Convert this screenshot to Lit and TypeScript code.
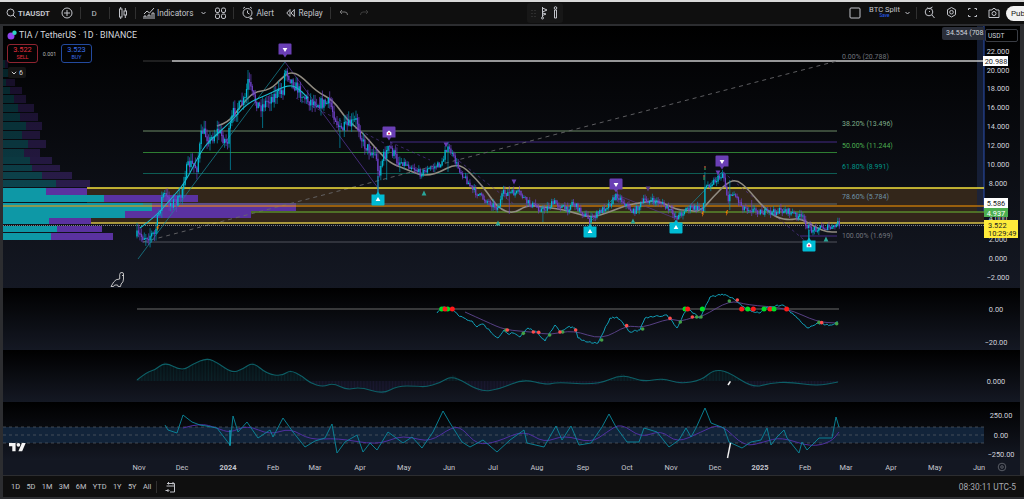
import { LitElement, html, css, svg } from "lit";
import { customElement } from "lit/decorators.js";

type P = [number, number];
const smooth = (pts: P[]) => {
  let d = `M${pts[0][0]} ${pts[0][1]}`;
  for (let i = 1; i < pts.length - 1; i++) {
    const mx = (pts[i][0] + pts[i + 1][0]) / 2, my = (pts[i][1] + pts[i + 1][1]) / 2;
    d += `Q${pts[i][0]} ${pts[i][1]} ${mx} ${my}`;
  }
  const l = pts[pts.length - 1];
  return d + `L${l[0]} ${l[1]}`;
};
const poly = (pts: P[]) => pts.map((p, i) => `${i ? "L" : "M"}${p[0]} ${p[1]}`).join("");

const pricePath: P[] = [[137,236],[145,236],[155,234],[157,222],[163,193],[170,203],[180,200],[185,173],[190,163],[197,167],[202,130],[210,140],[218,130],[227,143],[233,113],[245,100],[248,80],[253,97],[260,107],[272,97],[283,90],[285,68],[293,83],[307,100],[320,103],[330,103],[340,130],[357,120],[363,143],[377,157],[378,175],[383,157],[390,147],[397,160],[413,167],[420,173],[443,163],[445,148],[450,150],[458,167],[473,190],[483,198],[498,208],[503,193],[520,193],[527,202],[543,210],[555,202],[567,210],[572,202],[590,220],[610,203],[617,195],[633,212],[645,200],[660,202],[677,217],[687,208],[703,208],[705,187],[720,177],[723,172],[728,200],[733,192],[743,207],[763,212],[773,212],[785,210],[803,218],[810,230],[820,227],[833,228],[838,223]];
const interp = (x: number) => {
  for (let i = 1; i < pricePath.length; i++) {
    const a = pricePath[i - 1], b = pricePath[i];
    if (x <= b[0]) return a[1] + ((b[1] - a[1]) * (x - a[0])) / Math.max(1, b[0] - a[0]);
  }
  return pricePath[pricePath.length - 1][1];
};
let seed = 7;
const rnd = () => ((seed = (seed * 16807) % 2147483647) - 1) / 2147483646;

const jag = (pts: P[], step: number, amp: number): P[] => {
  const out: P[] = [];
  for (let i = 1; i < pts.length; i++) {
    const a = pts[i - 1], b = pts[i];
    const n = Math.max(1, Math.round((b[0] - a[0]) / step));
    for (let k = 0; k < n; k++) {
      const t = k / n;
      out.push([+(a[0] + (b[0] - a[0]) * t).toFixed(1), +(a[1] + (b[1] - a[1]) * t + (k ? (rnd() - 0.5) * amp * 2 : 0)).toFixed(1)]);
    }
  }
  out.push(pts[pts.length - 1]);
  return out;
};

interface Bar { x: number; o: number; c: number; h: number; l: number }
const bars: Bar[] = [];
const spikes: [number, number, number][] = [[231,118,170],[248,70,104],[262,100,128],[340,118,148],[378,150,196],[386,146,180],[448,142,172],[509,186,214],[543,205,222],[705,172,212],[730,180,210],[752,200,216],[809,226,246]];
{
  let prev = 236;
  for (let x = 137; x <= 840; x += 1.46) {
    const v = x < 400 ? 5.5 : 3;
    const c = interp(x) + (rnd() - 0.5) * v * 2;
    let h = Math.min(prev, c) - rnd() * v * 1.5;
    let l = Math.max(prev, c) + rnd() * v * 1.5;
    for (const s of spikes) if (Math.abs(s[0] - x) < 0.8) { h = Math.min(h, s[1]); l = Math.max(l, s[2]); }
    bars.push({ x, o: prev, c, h, l });
    prev = c;
  }
}
const wicks = (up: boolean) => bars.filter((b) => b.c < b.o === up).map((b) => `M${b.x.toFixed(1)} ${b.h.toFixed(1)}V${b.l.toFixed(1)}`).join("");
const bodies = (up: boolean) => bars.filter((b) => b.c < b.o === up).map((b) => `M${b.x.toFixed(1)} ${Math.min(b.o, b.c).toFixed(1)}V${(Math.max(b.o, b.c) + 0.6).toFixed(1)}`).join("");

const tealMA: P[] = [[140,228],[155,217],[170,200],[185,183],[200,153],[210,140],[230,123],[247,103],[267,95],[287,85],[297,87],[308,98]];
const greyMA: P[] = [[217,126],[228,123],[240,107],[253,92],[270,90],[283,77],[290,72],[300,75],[317,92],[333,100],[347,120],[363,133],[377,150],[390,163],[403,168],[420,175],[430,175],[440,172],[453,165],[463,166],[477,180],[487,192],[498,208],[513,214],[527,205],[543,207],[567,210],[590,218],[607,213],[627,205],[640,203],[657,200],[677,210],[687,210],[700,212],[713,197],[728,182],[737,180],[747,188],[763,207],[777,218],[790,220],[800,218],[817,228],[827,232],[837,232]];

const vp: [number, number, number, number, number][] = [
  [60, 8, 5, 8, 0.2],[69, 8, 8, 14, 0.22],[79, 7, 6, 15, 0.22],[87, 7, 10, 22, 0.24],[95, 8, 14, 26, 0.24],[104, 8, 18, 34, 0.26],[113, 8, 20, 38, 0.26],[122, 8, 26, 42, 0.28],[131, 8, 22, 40, 0.28],[140, 8, 28, 46, 0.3],[149, 8, 24, 40, 0.3],[157, 7, 30, 52, 0.32],[165, 6, 32, 60, 0.34],[172, 7, 42, 72, 0.36],[180, 7, 56, 90, 0.38],
  [188, 7, 46, 87, 1],[195, 7, 104, 198, 1],[203, 8, 152, 296, 1],[211, 7, 125, 251, 1],[218, 6, 49, 91, 1],[226, 6, 57, 102, 1],[233, 7, 51, 113, 1],
];

const cciC: P[] = [[165,425],[168,430],[177,433],[183,415],[192,422],[200,425],[217,428],[230,445],[233,416],[238,432],[247,422],[258,438],[270,430],[273,437],[283,418],[293,432],[305,447],[315,441],[325,438],[332,424],[337,453],[345,442],[357,435],[363,452],[370,443],[377,450],[388,432],[403,443],[412,437],[422,448],[433,432],[443,411],[450,423],[462,442],[470,447],[483,440],[497,452],[510,440],[524,430],[527,443],[544,447],[556,426],[562,440],[571,426],[579,445],[591,443],[602,427],[609,414],[616,427],[627,442],[639,442],[644,428],[657,432],[669,447],[679,440],[686,428],[691,437],[696,428],[705,408],[711,423],[724,428],[729,442],[742,448],[751,442],[761,440],[767,428],[771,445],[777,437],[784,430],[787,438],[799,453],[802,442],[807,450],[819,438],[832,438],[836,417],[839,427]];
const cciP: P[] = [[183,428],[200,423],[217,428],[230,433],[247,425],[270,435],[290,428],[310,440],[337,438],[377,445],[397,437],[410,437],[430,442],[452,427],[462,428],[477,445],[497,442],[524,430],[544,443],[564,435],[591,443],[607,432],[621,423],[641,438],[661,430],[677,443],[701,432],[721,423],[744,447],[764,442],[781,437],[811,447],[831,442],[839,432]];
const oscC: P[] = [[437,313],[443,307],[453,310],[458,315],[467,320],[472,321],[477,327],[483,324],[490,331],[498,338],[504,330],[508,334],[513,333],[520,337],[528,328],[538,333],[545,341],[555,325],[560,332],[568,327],[575,328],[578,338],[587,342],[598,343],[610,318],[617,317],[623,323],[630,332],[640,330],[645,318],[667,315],[677,328],[687,308],[700,318],[710,297],[722,294],[733,298],[747,310],[760,313],[767,307],[783,305],[797,318],[808,328],[817,323],[830,325],[838,322]];
const oscP: P[] = [[465,312],[487,322],[505,330],[533,332],[550,335],[573,330],[602,340],[627,325],[642,328],[670,318],[680,322],[693,317],[702,317],[730,300],[747,305],[787,308],[817,322],[837,323]];
const macd: P[] = [[137,380],[147,372],[155,370],[165,362],[182,371],[193,364],[207,358],[218,363],[232,373],[243,369],[253,362],[267,374],[282,376],[290,370],[302,376],[310,383],[323,387],[333,383],[347,390],[360,387],[383,394],[397,386],[417,386],[425,387],[440,383],[453,375],[480,392],[500,389],[523,379],[547,385],[557,382],[597,385],[622,374],[643,382],[663,378],[680,384],[702,380],[713,370],[727,371],[753,388],[770,383],[790,382],[817,386],[838,382]];
const macdAt = (x: number) => {
  for (let i = 1; i < macd.length; i++) {
    const a = macd[i - 1], b = macd[i];
    if (x <= b[0]) return a[1] + ((b[1] - a[1]) * (x - a[0])) / (b[0] - a[0]);
  }
  return 381;
};
const hist = { up: "", down: "" };
for (let x = 137; x <= 838; x += 1.46) {
  const y = macdAt(x);
  const seg = `M${x.toFixed(1)} 381V${y.toFixed(1)}`;
  if (y < 381) hist.up += seg; else hist.down += seg;
}
const oscJag = jag(oscC, 1.5, 0.9);

const zoomDots = (col: string, r: number, list: P[]) =>
  list.map((p) => svg`<circle cx=${400 + p[0] / 3} cy=${285 + p[1] / 3} r=${r} fill=${col}></circle>`);

const labelMark = (x: number, y: number, up: boolean, col: string, glyph: "tri" | "home") => {
  const s = 6.5;
  const d = up
    ? `M${x - s} ${y - s + 2}L${x - 2} ${y - s + 2}L${x} ${y - s - 1}L${x + 2} ${y - s + 2}L${x + s} ${y - s + 2}V${y + s - 1}q0 1 -1 1H${x - s + 1}q-1 0 -1 -1Z`
    : `M${x - s + 1} ${y - s}H${x + s - 1}q1 0 1 1V${y + s - 2}H${x + 2}L${x} ${y + s + 1}L${x - 2} ${y + s - 2}H${x - s}V${y - s + 1}q0 -1 1 -1Z`;
  return svg`<path d=${d} fill=${col}></path>${
    glyph === "tri"
      ? svg`<path d=${up ? `M${x - 2.4} ${y + 2}L${x} ${y - 2}L${x + 2.4} ${y + 2}Z` : `M${x - 2.4} ${y - 2}H${x + 2.4}L${x} ${y + 2}Z`} fill="#fff"></path>`
      : svg`<path d=${`M${x - 2.4} ${y - .4}L${x} ${y - 2.6}L${x + 2.4} ${y - .4}V${y + 2.2}H${x - 2.4}Z`} fill="#fff"></path><circle cx=${x} cy=${y + .6} r="1" fill="#e91e63"></circle>`
  }`;
};
const tri = (x: number, y: number, up: boolean, col: string, s = 2.4) =>
  svg`<path d=${up ? `M${x - s} ${y + s}L${x} ${y - s}L${x + s} ${y + s}Z` : `M${x - s} ${y - s}H${x + s}L${x} ${y + s}Z`} fill=${col}></path>`;

const months: [string, number, boolean][] = [["Nov",139,false],["Dec",182,false],["2024",228,true],["Feb",273,false],["Mar",315,false],["Apr",360,false],["May",404,false],["Jun",449,false],["Jul",493,false],["Aug",537,false],["Sep",583,false],["Oct",627,false],["Nov",671,false],["Dec",715,false],["2025",760,true],["Feb",805,false],["Mar",846,false],["Apr",891,false],["May",935,false],["Jun",979,false]];

const ic = (w: number, body: unknown) => html`<svg class="ic" width=${w} height="14" viewBox="0 0 ${w} 14" fill="none" stroke="currentColor" stroke-width="1">${body}</svg>`;

@customElement("app-root")
export class AppRoot extends LitElement {
  static styles = css`
    :host { display: block; width: 1024px; height: 499px; overflow: hidden; background: #2c2d30; font-family: Roboto, "Noto Sans", sans-serif; color: #c2c4ca; position: relative; }
    .strip { height: 2px; background: #d9d9d9; }
    .top { height: 22px; background: #0f0f0f; display: flex; align-items: center; font-size: 8.2px; white-space: nowrap; }
    .ic { display: block; flex: none; }
    .sep { width: 1px; height: 12px; background: #303030; flex: none; }
    .left { display: flex; align-items: center; padding-left: 6px; width: 370px; flex: none; box-sizing: border-box; }
    .left > * { flex: none; }
    .sym { font-weight: 700; margin-left: 2px; width: 31px; font-size: 7.8px; }
    .center { display: flex; align-items: center; gap: 5px; margin-left: 157px; background: #171717; height: 20px; padding: 0 5px 0 0; border-radius: 3px; }
    .center .dots { color: #333; margin-left: 4px; }
    .right { display: flex; align-items: center; margin-left: auto; height: 100%; }
    .split { width: 32px; display: flex; flex-direction: column; align-items: center; line-height: 7px; font-size: 7.6px; margin: -2px 3.500px 0 8px; }
    .split small { font-size: 4.6px; color: #2962ff; line-height: 6px; }
    .pub { background: #f2f2f2; color: #222; height: 15px; line-height: 15px; width: 18px; padding-left: 5px; box-sizing: border-box; border-radius: 8px 0 0 8px; margin-left: 6px; font-size: 8px; overflow: hidden; }
    .chart { margin: 2px 4px 0 3px; display: flex; flex-direction: column; position: relative; }
    .pane { display: block; background: linear-gradient(#000, #141823); }
    .timeaxis { display: block; background: #131722; }
    .bottom { margin: 1px 0 0 3px; height: 21px; background: #0f0f0f; display: flex; align-items: center; font-size: 7.4px; padding: 0 8px 0 8px; }
    .ranges { display: flex; gap: 6.400px; align-items: center; }
    .bottom .sep { margin: 0 7.500px 0 5px; }
    .clock { margin-left: auto; font-size: 8.400px; color: #a8aab0; }
    svg text { font-family: Roboto, "Noto Sans", sans-serif; }
    .ax { font-size: 7.4px; fill: #d1d4dc; text-anchor: middle; }
    .fib { font-size: 7px; }
    .tm { font-size: 7.4px; fill: #c4c6cd; text-anchor: middle; }
    .legend { position: absolute; left: 4px; top: 2px; font-size: 8.8px; color: #d6d8de; }
    .title { display: flex; align-items: center; gap: 2px; height: 13px; white-space: nowrap; }
    .trade { display: flex; align-items: center; margin-top: 3px; }
    .tb { width: 31px; height: 19px; border: 1px solid; border-radius: 3px; box-sizing: border-box; display: flex; flex-direction: column; align-items: center; font-size: 7.4px; line-height: 9px; }
    .tb small { font-size: 5.4px; line-height: 7px; }
    .sell { border-color: #8f2430; color: #e5303f; }
    .buy { border-color: #234a9e; color: #3a6ee8; }
    .sp { width: 23px; text-align: center; font-size: 5.4px; color: #b5b5b5; }
    .fold { display: flex; align-items: center; gap: 2px; margin: 4px 0 0 1px; width: 18px; height: 11px; background: #151515; border-radius: 2px; font-size: 7px; padding-left: 3px; box-sizing: border-box; }
    .tip { position: absolute; left: 939px; top: 1px; width: 42px; height: 13px; background: #2a2e39; border-radius: 2px 0 0 2px; font-size: 7px; line-height: 13px; color: #d1d4dc; padding-left: 4px; box-sizing: border-box; white-space: nowrap; overflow: hidden; }
    .cur { position: absolute; left: 982px; top: 3px; width: 33px; height: 13px; border: 1px solid #3a3d44; border-radius: 2px; background: #000; font-size: 6.6px; line-height: 12px; color: #d1d4dc; padding-left: 2px; box-sizing: border-box; }
  `;

  renderMain() {
    const fib: [number, string, string, number, string][] = [
      [131, "#6d8a66", "38.20% (13.496)", 126, "#7fae8a"],
      [152.5, "#2e7d32", "50.00% (11.244)", 147.5, "#4caf50"],
      [173.5, "#0d5c54", "61.80% (8.991)", 168.5, "#009688"],
    ];
    return svg`<svg class="pane" width="1017" height="262" viewBox="3 26 1017 262">
      <rect x="87" y="188" width="897" height="35" fill="#33261a"></rect>
      <rect x="977" y="26" width="7" height="186" fill="#18233f" opacity=".8"></rect>
      <path d="M984 26V212" stroke="#2a4fb0" stroke-width="1"></path>
      ${vp.map(([y, h, t, p, o]) => svg`<g opacity=${o}><rect x="3" y=${y} width=${t - 3} height=${h} fill="#0e98a6"></rect><rect x=${t} y=${y} width=${p - t} height=${h} fill="#5a32a0"></rect></g>`)}
      <path d="M143 61H172" stroke="#333" stroke-width="1.2"></path>
      <path d="M172 61H984" stroke="#c8c8c8" stroke-width="1.6"></path>
      ${fib.map(([y, c]) => svg`<path d=${`M143 ${y}H837`} stroke=${c} stroke-width="1"></path>`)}
      <path d="M143 204H837" stroke="#5f6a72" stroke-width="1"></path>
      <path d="M143 242H837" stroke="#50535c" stroke-width="1"></path>
      <path d="M390 142H837" stroke="#452a85" stroke-width="1"></path>
      <path d="M800 236H837" stroke="#452a85" stroke-width="1"></path>
      <path d="M143 242L837 61" stroke="#66666a" stroke-width=".9" stroke-dasharray="4 4"></path>
      <path d="M87 188H984" stroke="#f5e23b" stroke-width="1.3"></path>
      <path d="M91 223H984" stroke="#d9c24a" stroke-width="1.3"></path>
      <path d="M3 206H984" stroke="#ff9800" stroke-width="1.2"></path>
      <path d="M251 212H984" stroke="#5a8a2c" stroke-width="1.4"></path>
      <path d="M3 225.500H984" stroke="#9a9a9a" stroke-width=".8" stroke-dasharray="1 1"></path>
      <g opacity=".9">
        <path d="M138 259L285 62" stroke="#1b8a9a" stroke-width=".8" fill="none"></path>
        <path d="M285 62L378 188" stroke="#5a39a0" stroke-width=".8" fill="none"></path>
        <path d="M296 98L384 143" stroke="#5a39a0" stroke-width=".7" stroke-dasharray="3 3" fill="none"></path>
        <path d="M390 142L430 160" stroke="#5a39a0" stroke-width=".7" stroke-dasharray="3 3" fill="none"></path>
        <path d="M445 150L515 205" stroke="#5a39a0" stroke-width=".7" stroke-dasharray="3 3" fill="none"></path>
        <path d="M617 195L677 219" stroke="#5a39a0" stroke-width=".7" fill="none"></path>
        <path d="M590 222L617 195M677 219L722 172" stroke="#1b8a9a" stroke-width=".8" fill="none"></path>
        <path d="M723 172L809 244" stroke="#5a39a0" stroke-width=".7" stroke-dasharray="3 3" fill="none"></path>
      </g>
      <path d=${smooth(greyMA)} fill="none" stroke="#918c82" stroke-width="1.6" stroke-linejoin="round"></path>
      <path d=${wicks(false)} stroke="#6a3fc0" stroke-width=".7" fill="none"></path>
      <path d=${wicks(true)} stroke="#0097b2" stroke-width=".7" fill="none"></path>
      <path d=${bodies(false)} stroke="#6f42c9" stroke-width="1.200" fill="none"></path>
      <path d=${bodies(true)} stroke="#00bcd4" stroke-width="1.200" fill="none"></path>
      <path d=${smooth(tealMA)} fill="none" stroke="#1ab8cf" stroke-width="1.100" stroke-linejoin="round"></path>
      <path d="M378 176V198" stroke="#00acc1" stroke-width="1"></path>
      <path d="M809 230V245" stroke="#00acc1" stroke-width="1"></path>
      ${labelMark(285, 50, false, "#6a3fb5", "tri")}
      ${labelMark(389, 133, false, "#6a3fb5", "home")}
      ${labelMark(616, 185, false, "#6a3fb5", "tri")}
      ${labelMark(722, 162, false, "#6a3fb5", "tri")}
      ${labelMark(378, 199, true, "#00bcd4", "tri")}
      ${labelMark(590, 231, true, "#00bcd4", "tri")}
      ${labelMark(676, 227, true, "#00bcd4", "tri")}
      ${labelMark(809, 245, true, "#00bcd4", "home")}
      ${tri(424, 193, true, "#2aa69a")}${tri(498, 223, true, "#2aa69a")}${tri(633, 221, true, "#2aa69a")}${tri(826, 239, true, "#2aa69a")}
      ${tri(446, 145, false, "#6a3fb5")}${tri(514, 182, false, "#6a3fb5")}${tri(648, 189, false, "#5a3a8a")}${tri(718, 173, false, "#6a3fb5")}
      <path d="M158 225l-1.500 3h1l-.5 3 2-3.600h-1l1-2.400z M703 211l-1.500 3h1l-.5 3 2-3.600h-1l1-2.400z M727 210l-1.500 3h1l-.5 3 2-3.600h-1l1-2.400z" fill="#f57c00"></path>
      <path d="M705 166v2" stroke="#c0603a" stroke-width="1.2"></path><path d="M705 168v2" stroke="#3a9a5a" stroke-width="1.2"></path>
      <path d="M704 175v2" stroke="#c0603a" stroke-width="1.2"></path><path d="M704 177v3" stroke="#3a9a5a" stroke-width="1.2"></path>
      <path d="M122 272.500q-2-.5-2.300 2v4.500q-4.200 0-6 3l-2.700 4.500h2.600l1-1.500h3l.5 1.500h2.400l.6-2.500q2.400-1.700 2.400-5v-5q0-1.500-1.500-1.500zM122 275.500h2" fill="none" stroke="#d0d0d0" stroke-width=".9"></path>
      <text class="fib" x="842" y="59" fill="#70737c">0.00% (20.788)</text>
      ${fib.map(([, , t, y, c]) => svg`<text class="fib" x="842" y=${y} fill=${c}>${t}</text>`)}
      <text class="fib" x="842" y="199" fill="#6d92a8">78.60% (5.784)</text>
      <text class="fib" x="842" y="238" fill="#70737c">100.00% (1.699)</text>
      ${[[22,54],[20,73],[18,91],[16,110],[14,129],[12,148],[10,167],[8,186],[2,242],[0,261]].map(([v, y]) => svg`<text class="ax" x="998" y=${y}>${v.toFixed(3)}</text>`)}
      <text class="ax" x="998" y="280">−2.000</text>
      <rect x="983" y="56" width="25" height="10" fill="#fff"></rect><text class="ax" x="996" y="64" style="fill:#222">20.988</text>
      <text class="ax" x="998" y="221">4.000</text>
      <rect x="984" y="198" width="24" height="10" fill="#fff"></rect><text class="ax" x="996" y="206" style="fill:#222">5.586</text>
      <rect x="984" y="208" width="24" height="9" fill="#4caf50"></rect><text class="ax" x="996" y="215.500" style="fill:#fff">4.937</text>
      <rect x="984" y="220" width="34" height="18" fill="#ffeb3b"></rect>
      <text class="ax" x="988" y="228" style="fill:#222;text-anchor:start">3.522</text>
      <text class="ax" x="988" y="236" style="fill:#222;text-anchor:start">10:29:49</text>
    </svg>`;
  }

  renderOsc() {
    const bright: [number, string][] = [[125,"#00e025"],[143,"#00e025"],[135,"#ff1a1a"],[157,"#ff1a1a"],[855,"#00e025"],[863,"#ff1a1a"],[907,"#00e025"],[1025,"#ff1a1a"],[1043,"#00e025"],[1060,"#ff1a1a"],[1092,"#00e025"],[1110,"#ff1a1a"],[1122,"#00e025"],[1160,"#ff1a1a"]];
    const g: P[] = [[318,135],[370,145],[449,150],[488,141],[605,165],[728,132],[841,111],[890,96],[903,96],[988,48],[1257,112],[1310,116]];
    const r: P[] = [[322,135],[400,141],[416,142],[480,141],[527,135],[680,122],[810,100],[877,96],[1012,45],[1265,113]];
    return svg`<svg class="pane" width="1017" height="62" viewBox="3 288 1017 62">
      <path d="M137 309H839" stroke="#6a6a6a" stroke-width="1"></path>
      <path d=${smooth(oscP)} fill="none" stroke="#5f4590" stroke-width=".9"></path>
      <path d=${poly(oscJag)} fill="none" stroke="#10a0b8" stroke-width="1" stroke-linejoin="round"></path>
      ${bright.map(([x, c]) => svg`<circle cx=${400 + x / 3} cy="309" r="2.500" fill=${c}></circle>`)}
      ${zoomDots("#43a047", 1.8, g)}${zoomDots("#ff4d4d", 1.8, r)}
      <text class="ax" x="996" y="312">0.00</text>
      <text class="ax" x="996" y="345">−20.00</text>
    </svg>`;
  }

  renderMacd() {
    return svg`<svg class="pane" width="1017" height="52" viewBox="3 350 1017 52">
      <path d=${hist.up} stroke="#0c4a50" stroke-width=".8" opacity=".42"></path>
      <path d=${hist.down} stroke="#2b2350" stroke-width=".8" opacity=".5"></path>
      <path d=${smooth(macd)} fill="none" stroke="#0d5f66" stroke-width="1.100"></path>
      <path d="M728 385l2.400-3.600" stroke="#f4f4f4" stroke-width="1.600"></path>
      <text class="ax" x="996" y="384">0.000</text>
    </svg>`;
  }

  renderCci() {
    return svg`<svg class="pane" width="1017" height="58" viewBox="3 402 1017 58">
      <rect x="3" y="427" width="981" height="16" fill="#12243a"></rect>
      <path d="M3 427H984M3 435H984M3 443H984" stroke="#5a6068" stroke-width=".7" stroke-dasharray="3 3"></path>
      <path d=${smooth(cciP)} fill="none" stroke="#4f2fa0" stroke-width="1"></path>
      <path d=${poly(cciC)} fill="none" stroke="#0a8a9e" stroke-width=".9" stroke-linejoin="round"></path>
      <path d="M230 430V446" stroke="#13c4de" stroke-width="1"></path>
      <path d="M730.500 443L727.500 458" stroke="#f4f4f4" stroke-width="1.400"></path>
      <g transform="translate(9 441) scale(.47)" fill="#f5f5f5"><path d="M14 22H7V11H0V4h14v18zM28 22h-8l7.500-18h8L28 22z"></path><circle cx="20" cy="8" r="4"></circle></g>
      <text class="ax" x="1001" y="418">250.00</text>
      <text class="ax" x="1001" y="438">0.00</text>
      <text class="ax" x="1001" y="457">−250.00</text>
    </svg>`;
  }

  render() {
    return html`
      <div class="strip"></div>
      <div class="top">
        <div class="left">
          ${ic(10, svg`<circle cx="4.500" cy="6.500" r="3.500"></circle><path d="M7 9l2.500 2.500"></path>`)}
          <span class="sym">TIAUSDT</span>
          <span style="margin-left:12px">${ic(12, svg`<circle cx="6" cy="7" r="5"></circle><path d="M6 4v6M3 7h6"></path>`)}</span>
          <span class="sep" style="margin-left:7px"></span>
          <span style="margin:0 12.500px 0 10.500px;width:5px;font-size:8px">D</span>
          <span class="sep"></span>
          <span style="margin:0 7px 0 8px">${ic(10, svg`<rect x="1.500" y="3" width="2.500" height="8"></rect><path d="M2.700 1v2M2.700 11v2M7.300 2v3M7.300 9v3"></path><rect x="6" y="5" width="2.500" height="4"></rect>`)}</span>
          <span class="sep"></span>
          <span style="margin:0 2px 0 7px">${ic(12, svg`<path d="M1 8l3-3 2.500 2L11 2"></path><path d="M1 13V10h2v3M5 13V9h2v4M9 13V7h2v6"></path>`)}</span>
          <span style="width:35px">Indicators</span>
          <span style="margin-left:7.500px">${ic(7, svg`<path d="M1.500 6l2 2 2-2"></path>`)}</span>
          <span style="margin-left:8px">${ic(11, svg`<rect x=".5" y="2" width="4" height="4.500" rx="1.500"></rect><rect x="6.500" y="2" width="4" height="4.500" rx="1.500"></rect><rect x=".5" y="8" width="4" height="4.500" rx="1.500"></rect><rect x="6.500" y="8" width="4" height="4.500" rx="1.500"></rect>`)}</span>
          <span class="sep" style="margin-left:7.500px"></span>
          <span style="margin:0 3px 0 7.500px">${ic(12, svg`<circle cx="5.500" cy="7" r="4.500"></circle><path d="M5.500 4.500V7l2 1M1 2.500l2-1.500M10 2.500L8 1M9 11v3M7.500 12.500h3"></path>`)}</span>
          <span style="width:17px">Alert</span>
          <span style="margin-left:12.500px">${ic(9, svg`<path d="M4 3.500L.8 7 4 10.500zM8.300 3.500L5 7l3.300 3.500z"></path>`)}</span>
          <span style="margin-left:3.500px;width:24px">Replay</span>
          <span class="sep" style="margin-left:7px"></span>
          <span style="margin-left:8.500px;color:#777">${ic(9, svg`<path d="M3 4L1 6l2 2M1 6h5q2.500 0 2.500 3"></path>`)}</span>
          <span style="margin-left:12px;color:#3c3c3c">${ic(9, svg`<path d="M6 4l2 2-2 2M8 6H3Q.5 6 .5 9"></path>`)}</span>
        </div>
        <div class="center">
          <span class="dots">${ic(5, svg`<path d="M1 4v1M4 4v1M1 7v1M4 7v1M1 10v1M4 10v1" stroke="#444"></path>`)}</span>
          ${ic(7, svg`<path d="M1.500 1v10M1.500 2l4.500 2-4.500 2M1.500 7l3.500 1-3.500 1.500"></path><circle cx="1.500" cy="12" r="1"></circle>`)}
          ${ic(5, svg`<circle cx="2.500" cy="2" r="1.300"></circle><path d="M1.500 4v8h2V4z"></path>`)}
        </div>
        <div class="right">
          ${ic(12, svg`<rect x="1" y="2" width="10" height="10" rx="1"></rect>`)}
          <div class="split"><span>BTC Split</span><small>Save</small></div>
          ${ic(7, svg`<path d="M1.500 6l2 2 2-2"></path>`)}
          <span class="sep" style="margin:0 7px 0 4.500px"></span>
          ${ic(11, svg`<circle cx="5" cy="6" r="3.800"></circle><path d="M3.500 1.500L5 3l3.500-2M8 9l2.500 3M5 6l1-1"></path>`)}
          <span style="margin-left:11px">${ic(11, svg`<path d="M5.500 1.500l4 2.200v5L5.500 11l-4-2.300v-5z"></path><circle cx="5.500" cy="6.200" r="1.800"></circle>`)}</span>
          <span style="margin-left:10px">${ic(11, svg`<path d="M1.500 4V2.500h2M7.500 2.500h2V4M9.500 9v1.500h-2M3.500 10.500h-2V9"></path>`)}</span>
          <span style="margin-left:10.500px">${ic(12, svg`<path d="M1 4h3l1-1.500h2L8 4h3v7.500H1z"></path><circle cx="6" cy="7.500" r="2"></circle>`)}</span>
          <div class="pub">Pub</div>
        </div>
      </div>
      <div class="chart">
        ${this.renderMain()}${this.renderOsc()}${this.renderMacd()}${this.renderCci()}
        <svg class="timeaxis" width="1017" height="15" viewBox="3 460 1017 15">
          ${months.map(([m, x, b]) => svg`<text class="tm" x=${x} y="470" style=${b ? "font-weight:700" : ""}>${m}</text>`)}
          <circle cx="1002" cy="467" r="3.800" fill="none" stroke="#6a6d75" stroke-width=".8"></circle><circle cx="1002" cy="467" r="1.300" fill="none" stroke="#6a6d75" stroke-width=".8"></circle>
        </svg>
        <div class="legend">
          <div class="title">
            <svg width="10" height="10" viewBox="0 0 10 10"><circle cx="4" cy="6" r="3.500" fill="#8e44ec"></circle><circle cx="7.500" cy="2.800" r="2.200" fill="#2dd4bf"></circle></svg>
            <span>TIA / TetherUS · 1D · BINANCE</span>
          </div>
          <div class="trade">
            <div class="tb sell"><span>3.522</span><small>SELL</small></div>
            <div class="sp">0.001</div>
            <div class="tb buy"><span>3.523</span><small>BUY</small></div>
          </div>
          <div class="fold"><svg width="6" height="6" viewBox="0 0 6 6" fill="none" stroke="#ccc"><path d="M.8 1.800L3 4l2.200-2.200"></path></svg><span>6</span></div>
        </div>
        <div class="tip">34.554 (708.</div>
        <div class="cur">USDT</div>
      </div>
      <div class="bottom">
        <div class="ranges">${["1D","5D","1M","3M","6M","YTD","1Y","5Y","All"].map((r) => html`<span>${r}</span>`)}</div>
        <span class="sep"></span>
        ${ic(11, svg`<path d="M2 3.500h7.500V12H5M1.500 6h8M3.500 2v2.500M8 2v2.500M.5 10.500h3M2.500 9l1.500 1.500L2.500 12"></path>`)}
        <span class="clock">08:30:11 UTC-5</span>
      </div>
    `;
  }
}
